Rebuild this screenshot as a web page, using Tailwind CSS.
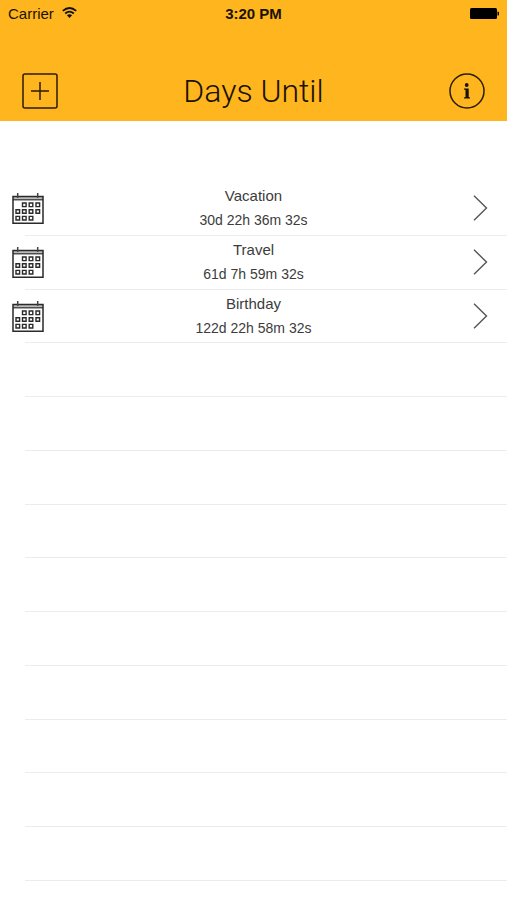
<!DOCTYPE html>
<html lang="en">
<head>
  <meta charset="UTF-8" />
  <meta name="viewport" content="width=device-width, initial-scale=1.0" />
  <title>Days Until</title>
  <script src="https://cdn.jsdelivr.net/npm/@tailwindcss/browser@4"></script>
</head>
<body class="bg-white font-['Liberation_Sans',Arial,sans-serif]">
  <!-- icons shared by the rows -->
  <svg class="hidden">
    <symbol id="calendar" viewBox="0 0 34 34">
      <g fill="none" stroke="#2a2a2a">
        <path d="M2 7H32" stroke="#bbb" stroke-width="3" />
        <path d="M2 5.500H32V32.300H2Z" stroke-width="1.500" />
        <path d="M2 8.800H32" stroke-width="1.200" />
        <path d="M6.700 2V7M26.700 2V7" stroke="#444" stroke-width="1.500" />
        <path d="M11.500 12h3.600v3.600h-3.600zM18.200 12h3.600v3.600h-3.600zM25 12h3.600v3.600h-3.600zM5 18.700h3.600v3.600h-3.600zM11.500 18.700h3.600v3.600h-3.600zM18.200 18.700h3.600v3.600h-3.600zM25 18.700h3.600v3.600h-3.600zM5 25.400h3.600v3.600h-3.600zM11.500 25.400h3.600v3.600h-3.600zM18.200 25.400h3.600v3.600h-3.600z" stroke-width="1.400" />
      </g>
    </symbol>
    <symbol id="chevron" viewBox="0 0 16 26">
      <path d="M2 .8 14.500 13 2 25.200" fill="none" stroke="#555" stroke-width="1.400" />
    </symbol>
  </svg>

  <div class="flex min-h-screen flex-col">
    <header class="bg-[#ffb51d] pb-3 text-[#1a1203]">
      <div class="grid h-7 grid-cols-3 items-center px-2 text-[15px] leading-5">
        <div class="flex items-center gap-2">
          <span>Carrier</span>
          <svg class="mb-1 h-[11px] w-[15px]" viewBox="0 0 15 11">
            <path d="M.8 3.900Q7.500 -2 14.200 3.900M3.200 6.500Q7.500 2.700 11.800 6.500" fill="none" stroke="#111" stroke-width="1.800" />
            <path d="M4.900 8.200Q7.500 6.200 10.100 8.200L7.500 11Z" fill="#111" />
          </svg>
        </div>
        <p class="text-center font-bold">3:20 PM</p>
        <svg class="h-3 w-[29px] justify-self-end" viewBox="0 0 29 12">
          <rect width="27" height="11" rx="1.500" fill="#000" />
          <path d="M27.500 3.500a2 2 0 0 1 0 4z" fill="#000" />
        </svg>
      </div>
      <div class="mt-[45px] flex items-center justify-between px-[22px]">
        <button type="button" aria-label="Add event">
          <svg class="size-9" viewBox="0 0 36 36" fill="none" stroke="#2a1d05" stroke-width="1.500">
            <rect x="1" y="1" width="34" height="34" rx="2" />
            <path d="M9 18H27M18 9V27" />
          </svg>
        </button>
        <h1 class="font-[Roboto,'Liberation_Sans',sans-serif] text-[32px] leading-9 font-light">Days Until</h1>
        <button type="button" aria-label="Info">
          <svg class="size-9" viewBox="0 0 36 36">
            <circle cx="18" cy="18" r="17" fill="none" stroke="#2a1d05" stroke-width="1.500" />
            <circle cx="17.700" cy="12" r="1.900" fill="#1a1203" />
            <path d="M15 15.500H19.700V24L21 24.400V25.500H15V24.400L16.500 24V16.900L15 16.600Z" fill="#1a1203" />
          </svg>
        </button>
      </div>
    </header>

    <main class="flex flex-1 flex-col pt-[61px] pb-[19px]">
      <ul class="grid flex-1 auto-rows-fr text-[#3c3c3c]">
        <li class="flex flex-col">
          <a href="#" class="grid flex-1 grid-cols-3 items-center">
            <svg class="ml-[11px] size-[34px]"><use href="#calendar" /></svg>
            <div class="text-center">
              <p class="text-[15px] leading-6">Vacation</p>
              <p class="text-[14px] leading-6">30d 22h 36m 32s</p>
            </div>
            <svg class="mr-[19px] h-[26px] w-4 justify-self-end"><use href="#chevron" /></svg>
          </a>
          <div class="ml-[25px] h-px bg-[#ececec]"></div>
        </li>
        <li class="flex flex-col">
          <a href="#" class="grid flex-1 grid-cols-3 items-center">
            <svg class="ml-[11px] size-[34px]"><use href="#calendar" /></svg>
            <div class="text-center">
              <p class="text-[15px] leading-6">Travel</p>
              <p class="text-[14px] leading-6">61d 7h 59m 32s</p>
            </div>
            <svg class="mr-[19px] h-[26px] w-4 justify-self-end"><use href="#chevron" /></svg>
          </a>
          <div class="ml-[25px] h-px bg-[#ececec]"></div>
        </li>
        <li class="flex flex-col">
          <a href="#" class="grid flex-1 grid-cols-3 items-center">
            <svg class="ml-[11px] size-[34px]"><use href="#calendar" /></svg>
            <div class="text-center">
              <p class="text-[15px] leading-6">Birthday</p>
              <p class="text-[14px] leading-6">122d 22h 58m 32s</p>
            </div>
            <svg class="mr-[19px] h-[26px] w-4 justify-self-end"><use href="#chevron" /></svg>
          </a>
          <div class="ml-[25px] h-px bg-[#ececec]"></div>
        </li>
        <!-- empty rows -->
        <li class="ml-[25px] border-b border-[#ececec]"></li>
        <li class="ml-[25px] border-b border-[#ececec]"></li>
        <li class="ml-[25px] border-b border-[#ececec]"></li>
        <li class="ml-[25px] border-b border-[#ececec]"></li>
        <li class="ml-[25px] border-b border-[#ececec]"></li>
        <li class="ml-[25px] border-b border-[#ececec]"></li>
        <li class="ml-[25px] border-b border-[#ececec]"></li>
        <li class="ml-[25px] border-b border-[#ececec]"></li>
        <li class="ml-[25px] border-b border-[#ececec]"></li>
        <li class="ml-[25px] border-b border-[#ececec]"></li>
      </ul>
    </main>
  </div>
</body>
</html>
